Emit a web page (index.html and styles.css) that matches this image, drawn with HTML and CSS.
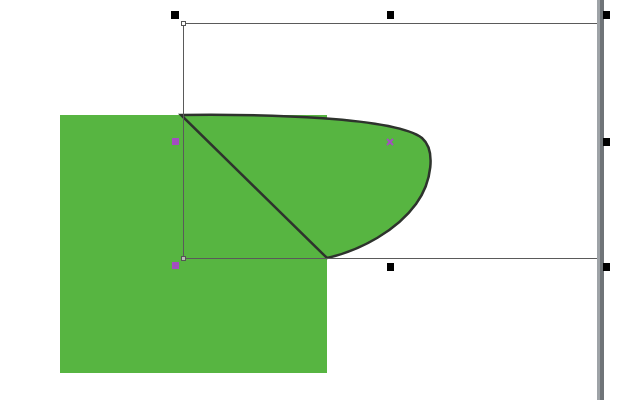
FILE: index.html
```html
<!DOCTYPE html>
<html>
<head>
<meta charset="utf-8">
<link rel="stylesheet" href="styles.css">
</head>
<body>
<div class="canvas">
<svg class="art" width="640" height="400" viewBox="0 0 640 400" xmlns="http://www.w3.org/2000/svg">
  <rect x="60" y="115" width="267" height="258" fill="#57b541"/>
  <path d="M181,115 C265,114 395,117 422,138 C436,150 432,182 416,204 C397,230 362,250 327,258 Z" fill="#57b541" stroke="#2e332d" stroke-width="2.5" stroke-linejoin="miter"/>
  <g fill="none" stroke="#5a5a5a" stroke-width="1">
    <line x1="183.5" y1="23.5" x2="598" y2="23.5"/>
    <line x1="183.5" y1="23.5" x2="183.5" y2="258.5"/>
    <line x1="183.5" y1="258.5" x2="598" y2="258.5"/>
  </g>
  <rect x="181.5" y="21.5" width="4" height="4" fill="#fff" stroke="#555"/>
  <rect x="181.5" y="256.5" width="4" height="4" fill="#bbb" stroke="#555"/>
  <rect x="597" y="0" width="3" height="400" fill="#9ea3a7"/>
  <rect x="600" y="0" width="4" height="400" fill="#6f7478"/>
  <g fill="#000">
    <rect x="171" y="11" width="8" height="8"/>
    <rect x="387" y="11" width="7" height="8"/>
    <rect x="603" y="11" width="7" height="8"/>
    <rect x="603" y="138" width="7" height="8"/>
    <rect x="603" y="263" width="7" height="8"/>
    <rect x="387" y="263" width="7" height="8"/>
  </g>
  <g fill="#a24fc0">
    <rect x="172" y="138" width="7" height="7"/>
    <rect x="172" y="262" width="7" height="7"/>
  </g>
  <g stroke="#a24fc0" stroke-width="2">
    <line x1="387" y1="139" x2="393" y2="145"/>
    <line x1="393" y1="139" x2="387" y2="145"/>
  </g>
</svg>
</div>
</body>
</html>
```

FILE: styles.css
```css
html, body {
  margin: 0;
  padding: 0;
  background: #ffffff;
}
.canvas {
  width: 640px;
  height: 400px;
  overflow: hidden;
}
.art {
  display: block;
}
```
